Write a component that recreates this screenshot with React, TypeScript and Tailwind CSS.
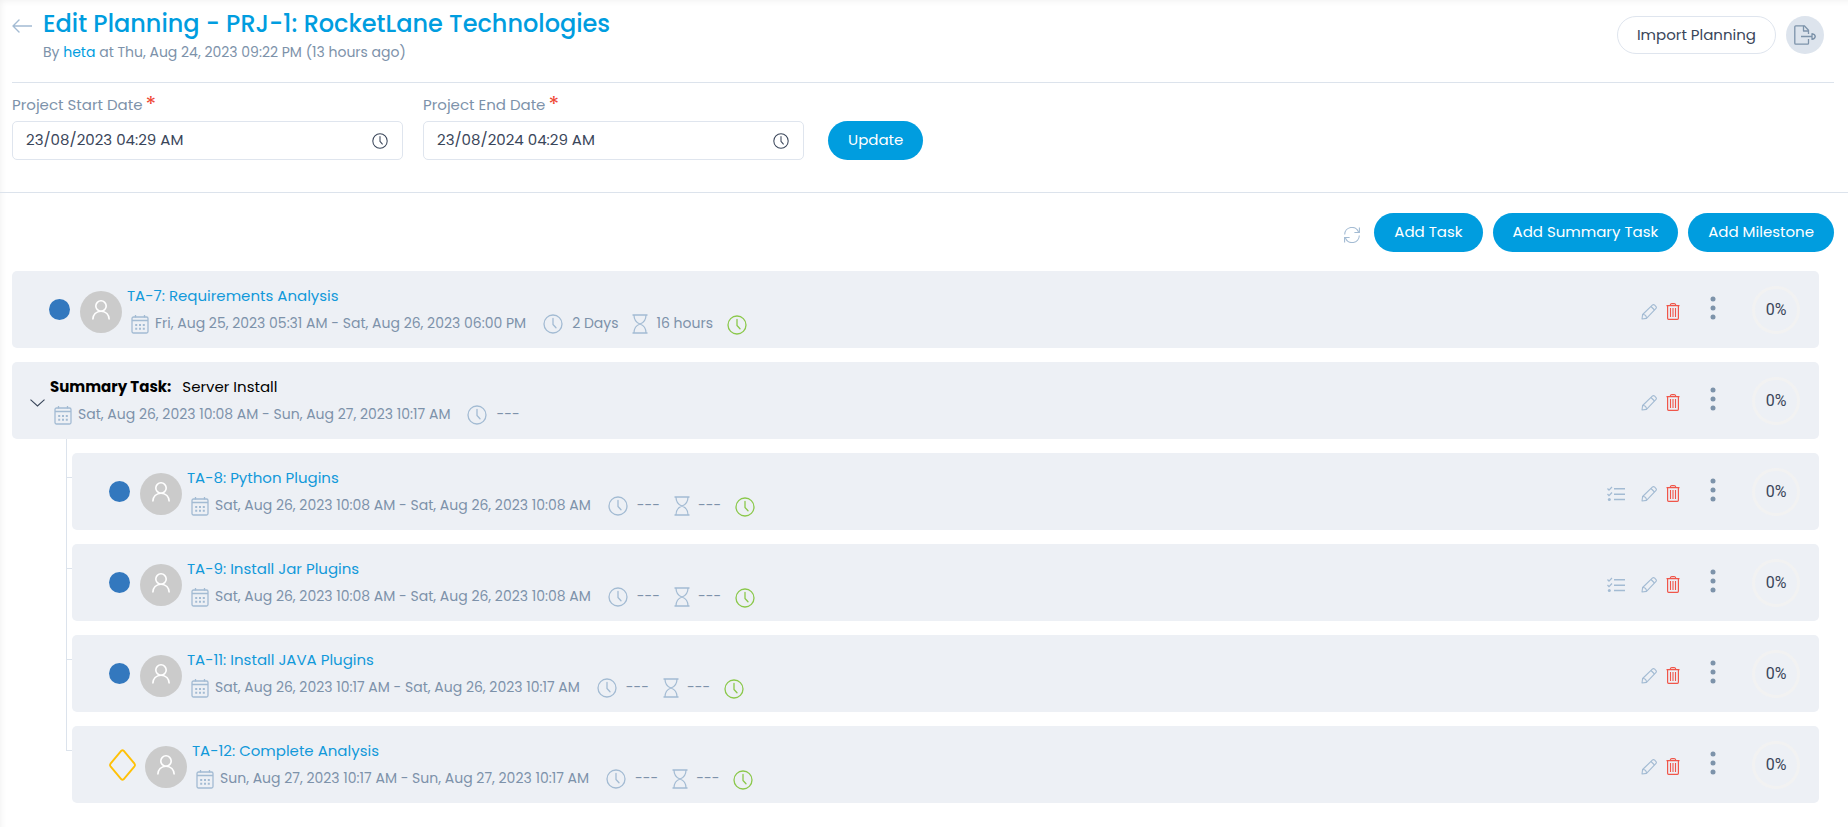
import { useState } from "react";
import type { ReactNode } from "react";

type TaskKind = "task" | "milestone" | "summary";

interface Task {
    id: string;
    kind: TaskKind;
    title: string;
    dates: string;
    duration: string;
    effort?: string;
    progress: number;
    hasChecklist?: boolean;
    children?: Task[];
}

const tasks: Task[] = [
    {
        id: "TA-7",
        kind: "task",
        title: "Requirements Analysis",
        dates: "Fri, Aug 25, 2023 05:31 AM - Sat, Aug 26, 2023 06:00 PM",
        duration: "2 Days",
        effort: "16 hours",
        progress: 0,
    },
    {
        id: "summary-1",
        kind: "summary",
        title: "Server Install",
        dates: "Sat, Aug 26, 2023 10:08 AM - Sun, Aug 27, 2023 10:17 AM",
        duration: "---",
        progress: 0,
        children: [
            {
                id: "TA-8",
                kind: "task",
                title: "Python Plugins",
                dates: "Sat, Aug 26, 2023 10:08 AM - Sat, Aug 26, 2023 10:08 AM",
                duration: "---",
                effort: "---",
                progress: 0,
                hasChecklist: true,
            },
            {
                id: "TA-9",
                kind: "task",
                title: "Install Jar Plugins",
                dates: "Sat, Aug 26, 2023 10:08 AM - Sat, Aug 26, 2023 10:08 AM",
                duration: "---",
                effort: "---",
                progress: 0,
                hasChecklist: true,
            },
            {
                id: "TA-11",
                kind: "task",
                title: "Install JAVA Plugins",
                dates: "Sat, Aug 26, 2023 10:17 AM - Sat, Aug 26, 2023 10:17 AM",
                duration: "---",
                effort: "---",
                progress: 0,
            },
            {
                id: "TA-12",
                kind: "milestone",
                title: "Complete Analysis",
                dates: "Sun, Aug 27, 2023 10:17 AM - Sun, Aug 27, 2023 10:17 AM",
                duration: "---",
                effort: "---",
                progress: 0,
            },
        ],
    },
];

/* Icons */

function ArrowLeftIcon() {
    return (
        <svg className="h-4 w-5" viewBox="0 0 20 16" fill="none" stroke="currentColor" strokeWidth="1.4" strokeLinecap="round" strokeLinejoin="round">
            <path d="M20 8H1M7 2L1 8l6 6" />
        </svg>
    );
}

function ClockIcon({ className }: { className: string }) {
    return (
        <svg className={className} viewBox="0 0 20 20" fill="none" stroke="currentColor" strokeWidth="1.3">
            <circle cx="10" cy="10" r="9" />
            <path d="M10 4.500v6l3 3.300" strokeLinecap="round" strokeLinejoin="round" />
        </svg>
    );
}

function CalendarIcon() {
    return (
        <svg className="h-5 w-[18px] shrink-0 text-[#a3bbd3]" viewBox="0 0 18 20" fill="none" stroke="currentColor">
            <rect x="1" y="3" width="16" height="16" rx="1.500" strokeWidth="1.300" />
            <path d="M1 6.500h16M4.500 1v2.500M13.500 1v2.500" strokeWidth="1.300" />
            <path d="M4.200 11h2M8 11h2M11.800 11h2M4.200 14.800h2M8 14.800h2M11.800 14.800h2" strokeWidth="2" />
        </svg>
    );
}

function HourglassIcon() {
    return (
        <svg className="h-5 w-4 shrink-0 text-[#a3bbd3]" viewBox="0 0 16 20" fill="none" stroke="currentColor" strokeWidth="1.2">
            <path d="M.5 1h15M.5 19h15" strokeWidth="1.400" />
            <path d="M2 1c0 5 2 7.600 6 9 4-1.400 6-4 6-9M2 19c0-5 2-7.600 6-9 4 1.400 6 4 6 9" />
        </svg>
    );
}

function PencilIcon() {
    return (
        <svg className="h-4 w-4" viewBox="0 0 16 16" fill="none" stroke="currentColor" strokeWidth="1.100" strokeLinejoin="round">
            <path d="M1 15l.6-4.500L11.300 1.200a1.700 1.700 0 0 1 2.400 0l1.100 1.100a1.700 1.700 0 0 1 0 2.400L5.500 14.400 1 15z" />
            <path d="M1.600 10.500c2.300 0 3.900 1.600 3.900 3.900M10 2.500L13.500 6" />
        </svg>
    );
}

function TrashIcon() {
    return (
        <svg className="h-[17px] w-[14px]" viewBox="0 0 14 17" fill="none" stroke="currentColor">
            <path d="M.5 2.700h13M4.200 2.500c0-1.200.7-1.900 1.500-1.900h2.600c.8 0 1.500.7 1.500 1.900" strokeWidth="1.200" />
            <path d="M1.600 2.700v12.600c0 .6.4 1 1 1h8.800c.6 0 1-.4 1-1V2.700" strokeWidth="1.200" />
            <path d="M4.500 5v9M7 5v9M9.500 5v9" strokeWidth="1.100" />
        </svg>
    );
}

function ChecklistIcon() {
    return (
        <svg className="h-4 w-[18px]" viewBox="0 0 18 16" fill="none" stroke="currentColor">
            <path d="M7 2.700h11M7 8.300h11M7 13.600h11" strokeWidth="1.500" />
            <path d="M.5 2.500l1.500 1.600L5 1M.5 8l1.500 1.600L5 6.500" strokeWidth="1.300" />
            <circle cx="2.300" cy="13.600" r="1.500" fill="currentColor" stroke="none" />
        </svg>
    );
}

function KebabIcon() {
    return (
        <svg className="h-6 w-[6px]" viewBox="0 0 6 24" fill="currentColor">
            <circle cx="3" cy="3" r="2.500" />
            <circle cx="3" cy="12" r="2.500" />
            <circle cx="3" cy="21" r="2.500" />
        </svg>
    );
}

function RefreshIcon() {
    return (
        <svg className="h-4 w-4" viewBox="0 0 16 16" fill="none" stroke="currentColor" strokeWidth="1.100">
            <path d="M.7 7.500A7.200 7.200 0 0 1 14.600 5M15.300 8.500A7.200 7.200 0 0 1 1.400 11" />
            <path d="M15.400.5v5h-5M.6 15.500v-5h5" />
        </svg>
    );
}

function ExportIcon() {
    return (
        <svg className="h-5 w-[22px]" viewBox="0 0 22 20" fill="none" stroke="currentColor" strokeWidth="1.300" strokeLinejoin="round">
            <path d="M14.500 9V5.200L10.300.8H1.800c-.6 0-1 .4-1 1v16.400c0 .6.4 1 1 1h11.700c.6 0 1-.4 1-1V14" />
            <path d="M9.500.8V6h5M7 11.500h11" />
            <path d="M18 8.700c1.800.3 3 1.400 3.300 2.800-.3 1.400-1.500 2.500-3.300 2.800z" />
        </svg>
    );
}

function Avatar() {
    return (
        <span className="mt-1 flex h-[42px] w-[42px] shrink-0 items-center justify-center rounded-full bg-[#cbcbcb] text-white">
            <svg className="mb-1 h-5 w-[18px]" viewBox="0 0 18 20" fill="none" stroke="currentColor" strokeWidth="1.600">
                <circle cx="9" cy="6" r="5.200" />
                <path d="M.8 19.500c0-4.800 3.400-8.300 8.200-8.300s8.200 3.500 8.200 8.300" />
            </svg>
        </span>
    );
}

function Marker({ kind }: { kind: TaskKind }) {
    if (kind === "milestone") {
        return (
            <svg className="mr-[9px] h-8 w-[27px] shrink-0" viewBox="0 0 27 32" fill="none" stroke="#ffc107" strokeWidth="1.900" strokeLinejoin="round">
                <path d="M12.400 1.700L1.500 14.700q-.9 1.300 0 2.600l10.900 13q1.100 1 2.200 0l10.900-13q.9-1.300 0-2.600l-10.900-13q-1.100-1-2.200 0z" />
            </svg>
        );
    }
    return <span className="mr-[10px] h-[21px] w-[21px] shrink-0 rounded-full bg-[#3378be]" />;
}

/* Building blocks */

function PrimaryButton({ children }: { children: ReactNode }) {
    return (
        <button type="button" className="h-[39px] rounded-full bg-[#009ddf] px-5 text-[15px] whitespace-nowrap text-white hover:bg-[#008bc6]">
            {children}
        </button>
    );
}

function DateField({ id, label, value, className }: { id: string; label: string; value: string; className: string }) {
    const [date, setDate] = useState(value);

    return (
        <div className={className}>
            <label htmlFor={id} className="block text-[15px] leading-6 text-[#7d92aa]">
                {label}
                <span className="relative top-[2px] ml-[3px] text-[22px] leading-[0] text-[#ef4836]">*</span>
            </label>
            <div className="mt-1 flex h-[39px] items-center rounded-[5px] border border-[#dfe5ee] pr-[14px] pl-[13px] text-[#3a465a]">
                <input
                    id={id}
                    type="text"
                    value={date}
                    onChange={(e) => setDate(e.target.value)}
                    className="min-w-0 flex-1 bg-transparent text-[15px] outline-none"
                />
                <ClockIcon className="h-4 w-4 shrink-0" />
            </div>
        </div>
    );
}

function TaskActions({ task }: { task: Task }) {
    return (
        <div className="ml-auto flex shrink-0 items-center pr-[19px]">
            <div className="mt-1 flex items-center text-[#a3bbd3]">
                {task.hasChecklist && (
                    <button type="button" aria-label="Checklist" className="mr-4">
                        <ChecklistIcon />
                    </button>
                )}
                <button type="button" aria-label="Edit">
                    <PencilIcon />
                </button>
                <button type="button" aria-label="Delete" className="ml-[9px] text-[#f0564a]">
                    <TrashIcon />
                </button>
            </div>
            <button type="button" aria-label="More options" className="mr-9 mb-1 ml-[30px] text-[#7d93aa]">
                <KebabIcon />
            </button>
            <span className="flex h-12 w-12 items-center justify-center rounded-full border-[3px] border-[#f2f2f2] font-['Roboto',sans-serif] text-[16px] text-[#3a465a]">
                {task.progress}%
            </span>
        </div>
    );
}

function TaskMeta({ task }: { task: Task }) {
    return (
        <div className="mt-1 ml-1 flex h-6 items-center text-[14px] whitespace-nowrap text-[#7d92aa]">
            <CalendarIcon />
            <span className="ml-[6px]">{task.dates}</span>
            <ClockIcon className="ml-[17px] h-5 w-5 shrink-0 text-[#a3bbd3]" />
            <span className="ml-[9px]">{task.duration}</span>
            {task.effort && (
                <>
                    <span className="ml-[14px] flex">
                        <HourglassIcon />
                    </span>
                    <span className="ml-2">{task.effort}</span>
                    <ClockIcon className="mt-[2px] ml-[14px] h-5 w-5 shrink-0 text-[#8bc84b]" />
                </>
            )}
        </div>
    );
}

function TaskRow({ task }: { task: Task }) {
    return (
        <div className="flex min-h-[77px] items-center rounded-[5px] bg-[#edf0f5] pl-[37px]">
            <Marker kind={task.kind} />
            <Avatar />
            <div className="ml-[5px]">
                <a href="#" className="block text-[15px] leading-6 text-[#1299da] hover:underline">
                    {task.id}: {task.title}
                </a>
                <TaskMeta task={task} />
            </div>
            <TaskActions task={task} />
        </div>
    );
}

function SummaryRow({ task }: { task: Task }) {
    const [open, setOpen] = useState(true);

    return (
        <>
            <div className="flex min-h-[77px] items-center rounded-[5px] bg-[#edf0f5] pl-[18px]">
                <button type="button" aria-label="Toggle subtasks" aria-expanded={open} onClick={() => setOpen(!open)} className="mt-1 mr-[5px] text-[#3a465a]">
                    <svg className="h-2 w-[15px]" viewBox="0 0 15 8" fill="none" stroke="currentColor" strokeWidth="1.100">
                        <path d="M.5.700l7 6.300 7-6.300" />
                    </svg>
                </button>
                <div>
                    <p className="text-[15px] leading-6 text-black">
                        <span className="mr-[11px] font-bold">Summary Task:</span>
                        {task.title}
                    </p>
                    <TaskMeta task={task} />
                </div>
                <TaskActions task={task} />
            </div>

            {/* Subtasks with their connector lines */}
            {open && (
                <ul className="mt-[14px] flex flex-col gap-[14px] pl-[60px]">
                    {task.children?.map((child) => (
                        <li
                            key={child.id}
                            className="relative before:absolute before:-top-[14px] before:-left-[6px] before:h-[91px] before:border-l before:border-[#dce3ec] after:absolute after:top-6 after:-left-[6px] after:w-[6px] after:border-t after:border-[#dce3ec] last:before:h-[38px]"
                        >
                            <TaskRow task={child} />
                        </li>
                    ))}
                </ul>
            )}
        </>
    );
}

export default function App() {
    return (
        <main className="min-h-screen bg-white font-['Poppins','Inter',sans-serif] shadow-[inset_4px_4px_6px_-3px_rgba(0,0,0,0.06)]">
            {/* Page header */}
            <header className="mr-[14px] ml-3 flex items-start justify-between border-b border-[#dce3ec] pt-2 pb-[18px]">
                <div className="flex">
                    <a href="#" aria-label="Back" className="mt-[10px] text-[#a3bbd3]">
                        <ArrowLeftIcon />
                    </a>
                    <div className="ml-[11px]">
                        <h1 className="text-2xl leading-8 font-medium text-[#009ddf]">Edit Planning - PRJ-1: RocketLane Technologies</h1>
                        <p className="text-[14px] leading-6 text-[#7d92aa]">
                            By{" "}
                            <a href="#" className="text-[#009ddf]">
                                heta
                            </a>{" "}
                            at Thu, Aug 24, 2023 09:22 PM (13 hours ago)
                        </p>
                    </div>
                </div>
                <div className="mt-2 mr-[10px] flex items-center gap-[10px]">
                    <button type="button" className="h-[38px] rounded-full border border-[#dfe5ee] px-[19px] text-[15px] text-[#3a465a]">
                        Import Planning
                    </button>
                    <button type="button" aria-label="Export" className="flex h-[38px] w-[38px] items-center justify-center rounded-full bg-[#dde4ed] text-[#7d93aa]">
                        <ExportIcon />
                    </button>
                </div>
            </header>

            {/* Project dates */}
            <form className="flex items-end border-b border-[#dce3ec] px-3 pt-[10px] pb-8" onSubmit={(e) => e.preventDefault()}>
                <DateField id="start-date" label="Project Start Date" value="23/08/2023 04:29 AM" className="mr-5 w-[391px]" />
                <DateField id="end-date" label="Project End Date" value="23/08/2024 04:29 AM" className="mr-6 w-[381px]" />
                <PrimaryButton>Update</PrimaryButton>
            </form>

            <section className="pt-5 pb-6 pl-3">
                <div className="mr-[14px] flex items-center justify-end gap-[10px]">
                    <button type="button" aria-label="Refresh" className="mt-1 mr-1 text-[#a3bbd3]">
                        <RefreshIcon />
                    </button>
                    <PrimaryButton>Add Task</PrimaryButton>
                    <PrimaryButton>Add Summary Task</PrimaryButton>
                    <PrimaryButton>Add Milestone</PrimaryButton>
                </div>

                <ul className="mt-[19px] mr-[29px] flex flex-col gap-[14px]">
                    {tasks.map((task) => (
                        <li key={task.id}>{task.kind === "summary" ? <SummaryRow task={task} /> : <TaskRow task={task} />}</li>
                    ))}
                </ul>
            </section>
        </main>
    );
}
